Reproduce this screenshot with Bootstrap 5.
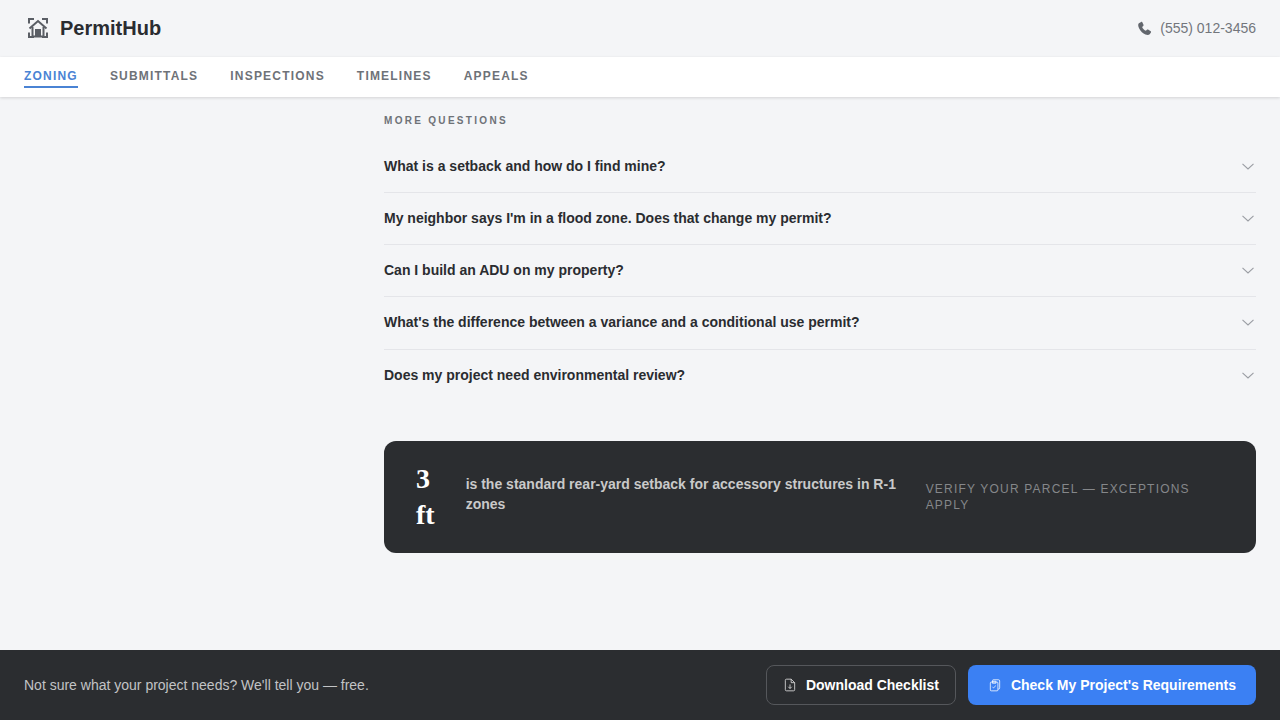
<!DOCTYPE html>
<html lang="en">
<head>
    <meta charset="UTF-8">
    <meta name="viewport" content="width=device-width, initial-scale=1.0">
    <title>PermitHub</title>
    <link href="https://cdn.jsdelivr.net/npm/bootstrap@5.3.0/dist/css/bootstrap.min.css" rel="stylesheet">
    <style>
        html, body { height: 100%; }
        body {
            font-family: "Liberation Sans", Arial, sans-serif;
            background: #f4f5f7;
            color: #2a2c30;
            overflow: hidden;
        }
        .page-shell { height: 720px; }
        .top-head { height: 57px; padding: 0 24px 0 26px; }
        .brand-wrap { gap: 10px; padding-bottom: 2px; }
        .brand-name { font-size: 20px; font-weight: 700; color: #2a2c30; }
        .phone-text { font-size: 14px; color: #73767c; }
        .tab-bar {
            height: 40px;
            background: #fff;
            padding: 0 24px 2px;
            gap: 32px;
            box-shadow: 0 1px 3px rgba(0,0,0,.14);
            position: relative;
        }
        .tab-link {
            font-size: 12px;
            font-weight: 700;
            letter-spacing: 1.2px;
            color: #6e7278;
            text-decoration: none;
            padding: 3px 0 1px;
            border-bottom: 2px solid transparent;
        }
        .tab-link.active-tab { color: #4a83d4; border-bottom-color: #4a83d4; }
        .main-area { padding: 0 24px 0 384px; }
        .section-label {
            font-size: 10px;
            font-weight: 700;
            letter-spacing: 2.3px;
            color: #6e7278;
            margin-top: 17.800px;
            margin-bottom: 14px;
            line-height: 12px;
        }
        .faq-row {
            height: 52.2px;
            border-bottom: 1px solid #e4e5e9;
            font-size: 14px;
            font-weight: 700;
            color: #2a2c30;
        }
        .faq-row:last-child { border-bottom: 0; }
        .faq-chev { margin-right: 2px; }
        .stat-box {
            margin-top: 39.200px;
            height: 112px;
            background: #2b2d30;
            border-radius: 12px;
            padding: 0 32px;
            gap: 30px;
        }
        .stat-num {
            font-family: "Liberation Serif", "Times New Roman", serif;
            font-size: 28px;
            font-weight: 700;
            line-height: 36px;
            color: #fff;
            width: 20px;
            margin-right: 0.500px;
        }
        .stat-text {
            font-size: 14px;
            font-weight: 700;
            line-height: 20px;
            color: #c9c9c9;
            width: 431px;
            flex-shrink: 0;
            padding-bottom: 6px;
        }
        .stat-note {
            font-size: 12px;
            letter-spacing: 1.2px;
            line-height: 16px;
            color: #85878a;
            margin-left: -1px;
        }
        .foot-bar {
            height: 70px;
            background: #2b2d30;
            padding: 0 24px;
        }
        .foot-text { font-size: 14px; color: #c2c3c5; }
        .btn-ghost, .btn-main {
            font-size: 14px;
            font-weight: 700;
            color: #fff;
            height: 40px;
            border-radius: 8px;
            display: flex;
            align-items: center;
        }
        .btn-ghost { border: 1px solid #55575b; background: transparent; padding: 0 16px 0 16px; gap: 9px; }
        .btn-main { border: 0; background: #3b80f3; padding: 0 20px; gap: 9px; }
        .btn-ghost:hover, .btn-main:hover { color: #fff; }
    </style>
</head>
<body>
    <div class="page-shell d-flex flex-column">
        <header class="top-head d-flex align-items-center justify-content-between">
            <div class="brand-wrap d-flex align-items-center">
                <svg width="24" height="24" viewBox="0 0 24 24" fill="none" stroke="#5a5e65" stroke-width="2">
                    <path d="M3 7.500V3h5M16 3h5v4.500M3 16.500V21h5M16 21h5v-4.500"/>
                    <path d="M3.500 12.500 12 5l8.500 7.500"/>
                    <path d="M6.500 11v9.500h11V11"/>
                    <rect x="9" y="13" width="6" height="7" fill="#5a5e65" stroke="none"/>
                </svg>
                <span class="brand-name">PermitHub</span>
            </div>
            <div class="d-flex align-items-center gap-2">
                <svg width="15" height="15" viewBox="0 0 24 24" fill="#62666d"><path d="M6.600 1.500 3 3.500C1.500 5 1.500 8 3.500 12c2.300 4.500 6 7.800 10 9.500 3 1.200 5.500 1 6.800-.5l2-2.800c.4-.6.300-1.300-.3-1.700l-4.300-2.800c-.6-.4-1.300-.3-1.800.2l-1.700 1.800c-2.600-1.200-5-3.800-6-6.300l1.800-1.500c.6-.5.700-1.200.4-1.800L8.500 2c-.4-.7-1.200-.9-1.900-.5z"/></svg>
                <span class="phone-text">(555) 012-3456</span>
            </div>
        </header>
        <nav class="tab-bar d-flex align-items-center">
            <a class="tab-link active-tab" href="#">ZONING</a>
            <a class="tab-link" href="#">SUBMITTALS</a>
            <a class="tab-link" href="#">INSPECTIONS</a>
            <a class="tab-link" href="#">TIMELINES</a>
            <a class="tab-link" href="#">APPEALS</a>
        </nav>
        <main class="main-area flex-grow-1">
            <div class="section-label">MORE QUESTIONS</div>
            <div class="faq-list" id="faqList"></div>
            <div class="stat-box d-flex align-items-center">
                <div class="stat-num">3 ft</div>
                <div class="stat-text">is the standard rear-yard setback for accessory structures in R-1 zones</div>
                <div class="stat-note">VERIFY YOUR PARCEL — EXCEPTIONS APPLY</div>
            </div>
        </main>
        <footer class="foot-bar d-flex align-items-center justify-content-between">
            <div class="foot-text">Not sure what your project needs? We'll tell you — free.</div>
            <div class="d-flex gap-2">
                <button class="btn btn-ghost me-1">
                    <svg width="14" height="14" viewBox="0 0 24 24" fill="none" stroke="#e2e2e2" stroke-width="1.400"><path d="M14 2H6a2 2 0 0 0-2 2v16a2 2 0 0 0 2 2h12a2 2 0 0 0 2-2V8z"/><path d="M14 2v6h6M12 11v7M9 15l3 3 3-3"/></svg>
                    Download Checklist
                </button>
                <button class="btn btn-main">
                    <svg width="14" height="14" viewBox="0 0 24 24" fill="none" stroke="#fff" stroke-width="1.300"><path d="M8 7V4a1 1 0 0 1 1-1h9a2 2 0 0 1 2 2v12a2 2 0 0 1-2 2h-1"/><rect x="4" y="7" width="13" height="15" rx="1.500"/><path d="M7.500 5.500h6V9h-6zM7.500 15l2 2 4-4"/></svg>
                    Check My Project's Requirements
                </button>
            </div>
        </footer>
    </div>
    <script>
        const questions = [
            "What is a setback and how do I find mine?",
            "My neighbor says I'm in a flood zone. Does that change my permit?",
            "Can I build an ADU on my property?",
            "What's the difference between a variance and a conditional use permit?",
            "Does my project need environmental review?"
        ];
        document.getElementById('faqList').innerHTML = questions.map(q => `
            <div class="faq-row d-flex align-items-center justify-content-between">
                <span>${q}</span>
                <svg class="faq-chev" width="12" height="7" viewBox="0 0 12 7" fill="none" stroke="#9a9da3" stroke-width="1.100"><path d="M.5.8 6 6 11.500.8"/></svg>
            </div>`).join('');
    </script>
    <script src="https://cdn.jsdelivr.net/npm/bootstrap@5.3.0/dist/js/bootstrap.bundle.min.js"></script>
</body>
</html>
